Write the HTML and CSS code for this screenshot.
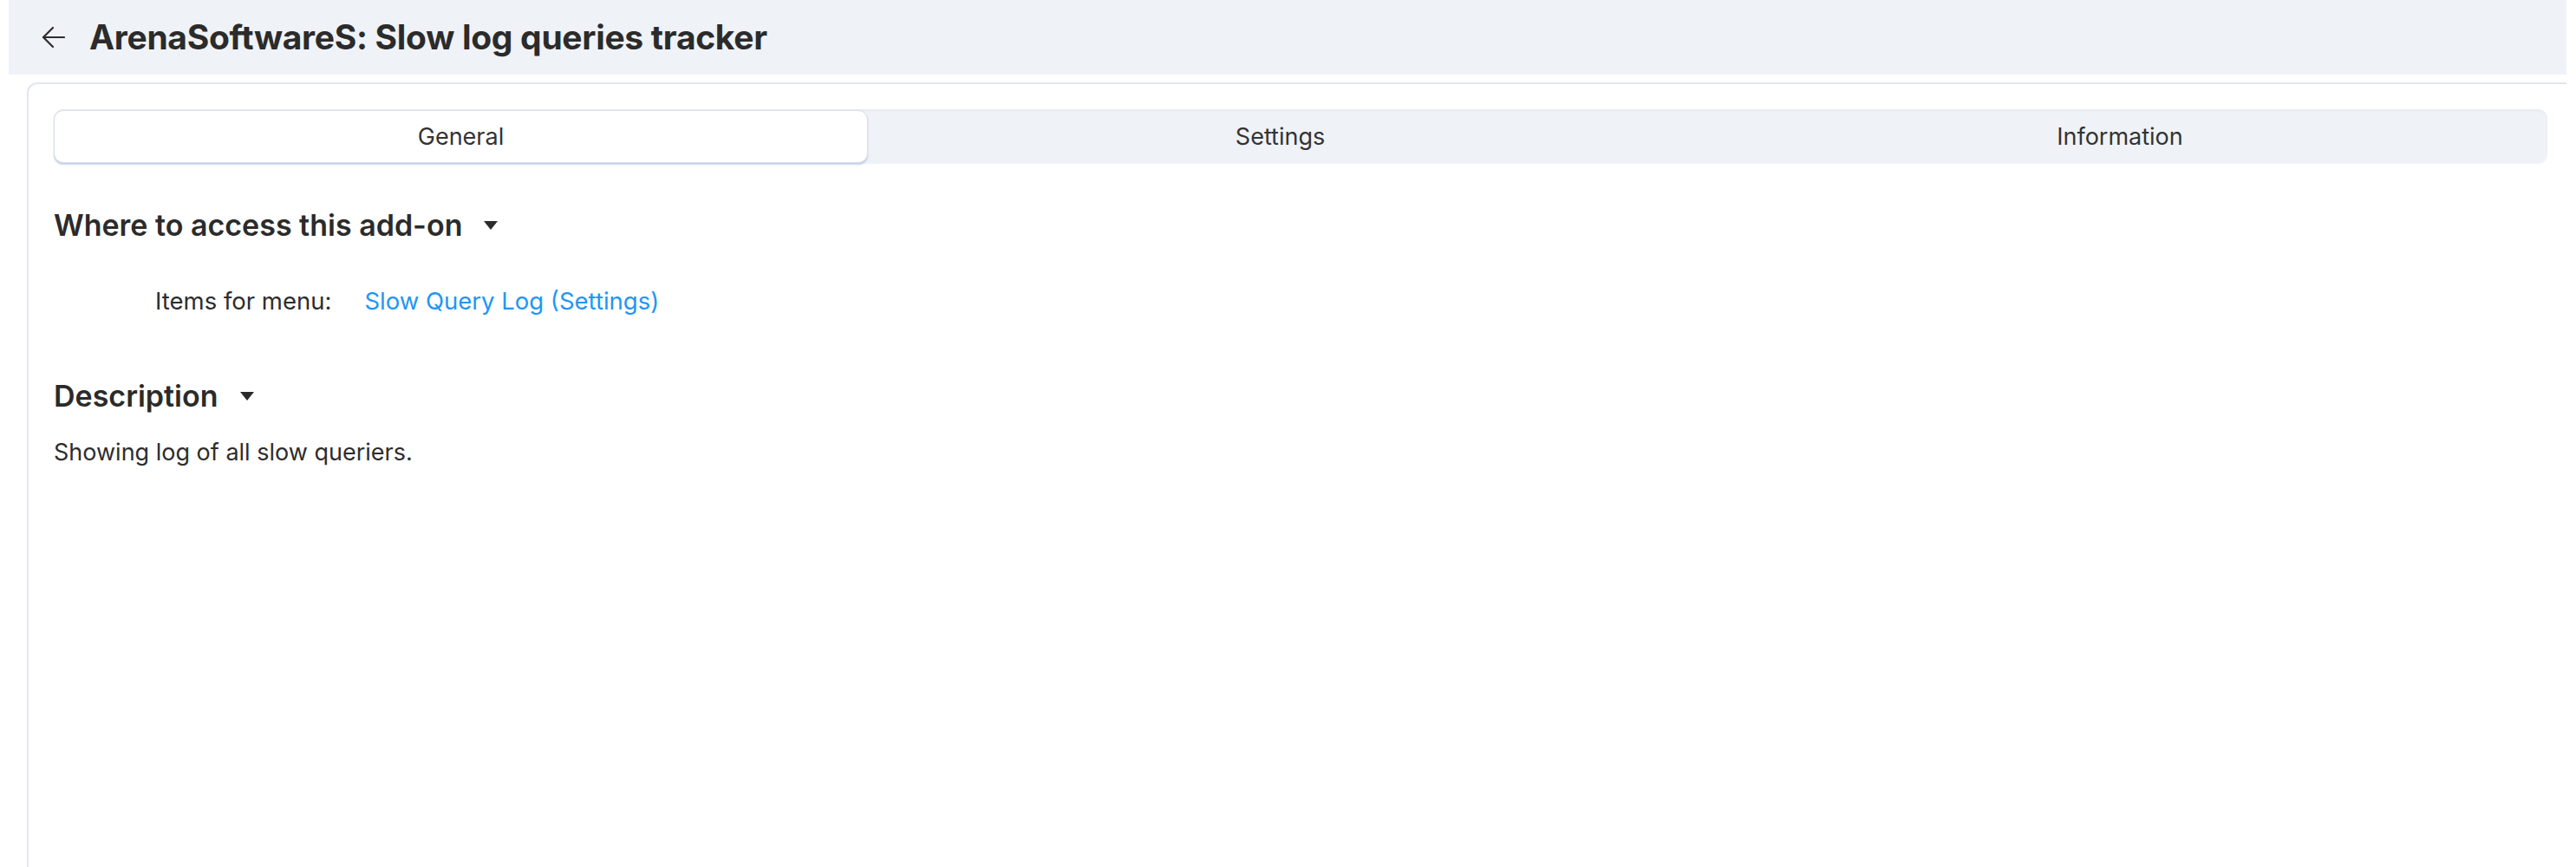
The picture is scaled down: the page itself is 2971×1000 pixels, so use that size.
FILE: index.html
```html
<!DOCTYPE html>
<html lang="en">
<head>
<meta charset="utf-8">
<title>ArenaSoftwareS: Slow log queries tracker</title>
<link rel="stylesheet" href="styles.css">
</head>
<body>
<div class="page">
  <header class="header">
    <button class="back" aria-label="Back">
      <svg width="27" height="26" viewBox="0 0 27 26" fill="none" stroke="#2d2d2d" stroke-width="2.2" stroke-linecap="round" stroke-linejoin="round">
        <path d="M26 13 H2"/>
        <path d="M13 2 L2 13 L13 24"/>
      </svg>
    </button>
    <h1 class="title">ArenaSoftwareS: Slow log queries tracker</h1>
  </header>
  <main class="card">
    <nav class="tabs">
      <div class="tab active">General</div>
      <div class="tab">Settings</div>
      <div class="tab">Information</div>
    </nav>
    <section class="section">
      <h2 class="section-title">Where to access this add-on <span class="caret"></span></h2>
      <div class="menu-row">
        <span class="menu-label">Items for menu:</span>
        <a class="menu-link" href="#">Slow Query Log (Settings)</a>
      </div>
    </section>
    <section class="section desc">
      <h2 class="section-title">Description <span class="caret"></span></h2>
      <p class="desc-text">Showing log of all slow queriers.</p>
    </section>
  </main>
</div>
</body>
</html>
```
FILE: styles.css
```css
html, body {
  margin: 0;
  padding: 0;
  background: #ffffff;
  overflow: hidden;
  height: 1000px;
}
body {
  font-family: Inter, "Noto Sans", "Liberation Sans", sans-serif;
  color: #2d2d2d;
}
.page {
  padding: 0 11px 0 10px;
  display: flex;
  flex-direction: column;
  height: 1000px;
  box-sizing: border-box;
}
.header {
  height: 86px;
  background: #eff2f7;
  display: flex;
  align-items: center;
  padding-left: 38px;
  gap: 28px;
  flex: none;
}
.back {
  border: 0;
  background: transparent;
  padding: 0;
  width: 27px;
  height: 26px;
  display: flex;
}
.title {
  margin: 0;
  font-size: 39px;
  font-weight: 700;
  letter-spacing: -0.3px;
  line-height: 48px;
  color: #2b2b2b;
}
.card {
  margin-top: 9px;
  margin-left: 21px;
  flex: 1;
  border-top: 2px solid #e2e6f1;
  border-left: 2px solid #e2e6f1;
  border-top-left-radius: 12px;
  padding: 29px 22px 0 29px;
}
.tabs {
  display: grid;
  grid-template-columns: 939fr 951fr 986fr;
  height: 63px;
  background: #eff2f7;
  border-radius: 11px;
  box-shadow: inset 0 2px 3px rgba(0, 0, 0, 0.035);
}
.tab {
  display: flex;
  align-items: center;
  justify-content: center;
  font-size: 27px;
  color: #333333;
}
.tab.active {
  background: #ffffff;
  border: 1.5px solid #d8deec;
  border-radius: 11px;
  box-shadow: 0 2px 2px rgba(140, 160, 205, 0.45);
  margin: 1px 0 1px 0;
}
.section {
  margin-top: 51px;
}
.section.desc {
  margin-top: 73px;
}
.section-title {
  margin: 0;
  font-size: 34px;
  font-weight: 600;
  line-height: 40px;
  display: flex;
  align-items: center;
  color: #2b2b2b;
}
.caret {
  display: inline-block;
  width: 0;
  height: 0;
  border-left: 8.5px solid transparent;
  border-right: 8.5px solid transparent;
  border-top: 10px solid #2b2b2b;
  margin-left: 25px;
  margin-top: 0;
}
.menu-row {
  margin-top: 51px;
  padding-left: 117px;
  display: flex;
  gap: 38px;
  font-size: 27.5px;
  line-height: 33px;
}
.menu-label {
  color: #2d2d2d;
}
.menu-link {
  color: #2196f3;
  text-decoration: none;
}
.desc-text {
  margin: 28px 0 0 0;
  font-size: 27px;
  line-height: 33px;
  color: #2d2d2d;
}
```
